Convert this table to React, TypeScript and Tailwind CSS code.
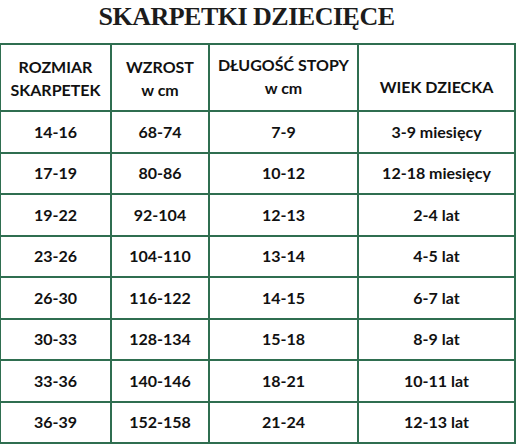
const rows = [
  ['14-16', '68-74', '7-9', '3-9 miesięcy'],
  ['17-19', '80-86', '10-12', '12-18 miesięcy'],
  ['19-22', '92-104', '12-13', '2-4 lat'],
  ['23-26', '104-110', '13-14', '4-5 lat'],
  ['26-30', '116-122', '14-15', '6-7 lat'],
  ['30-33', '128-134', '15-18', '8-9 lat'],
  ['33-36', '140-146', '18-21', '10-11 lat'],
  ['36-39', '152-158', '21-24', '12-13 lat'],
]

const cell = 'border-2 border-[#2f6e50] text-center align-middle p-0'

export default function App() {
  return (
    <div className="w-[517px] h-[444px] bg-white overflow-hidden font-['Lato',sans-serif] text-[#111] font-bold">
      <h1 className="h-[43px] pr-[24px] text-center font-['Liberation_Serif',serif] text-[26px] tracking-[-0.5px] font-bold leading-[34px] text-[#1c1c1c]">
        SKARPETKI DZIECIĘCE
      </h1>
      <table className="border-collapse table-fixed w-[515px] ml-[-1px]">
        <colgroup>
          <col className="w-[111px]" />
          <col className="w-[98px]" />
          <col className="w-[149px]" />
          <col className="w-[157px]" />
        </colgroup>
        <thead>
          <tr className="h-[67px] text-[16px] leading-[23px]">
            <th className={cell}>ROZMIAR<br />SKARPETEK</th>
            <th className={cell}>WZROST<br />w cm</th>
            <th className={cell + ' align-top pt-[8px]'}>DŁUGOŚĆ STOPY<br />w cm</th>
            <th className={cell + ' pt-[18px]'}>WIEK DZIECKA</th>
          </tr>
        </thead>
        <tbody className="text-[16px]">
          {rows.map((r) => (
            <tr key={r[0]} className="h-[41.5px]">
              {r.map((v, i) => (
                <td key={i} className={cell}>{v}</td>
              ))}
            </tr>
          ))}
        </tbody>
      </table>
    </div>
  )
}
